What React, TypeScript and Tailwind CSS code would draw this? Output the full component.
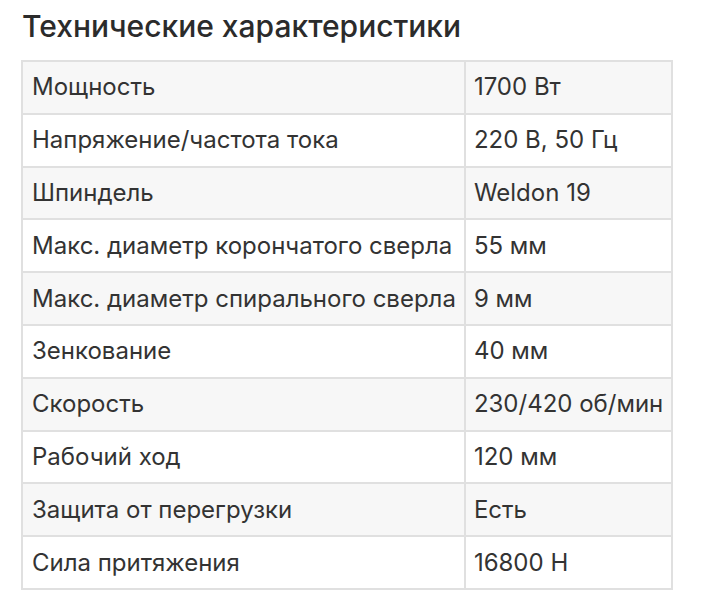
import React from "react";

const rows: [string, string][] = [
  ["Мощность", "1700 Вт"],
  ["Напряжение/частота тока", "220 В, 50 Гц"],
  ["Шпиндель", "Weldon 19"],
  ["Макс. диаметр корончатого сверла", "55 мм"],
  ["Макс. диаметр спирального сверла", "9 мм"],
  ["Зенкование", "40 мм"],
  ["Скорость", "230/420 об/мин"],
  ["Рабочий ход", "120 мм"],
  ["Защита от перегрузки", "Есть"],
  ["Сила притяжения", "16800 Н"],
];

export default function App() {
  return (
    <div className="w-[717px] h-[610px] bg-white pl-[21px] pt-[8px] text-[#333]" style={{ fontFamily: "Inter, 'Noto Sans', sans-serif" }}>
      <h2 className="text-[30px] leading-[36px] font-medium text-[#2b2b2b] mb-[16px] ml-[1px]">Технические характеристики</h2>
      <table className="border-collapse w-[652px] text-[24px]">
        <tbody>
          {rows.map(([k, v], i) => (
            <tr key={k} className={i % 2 === 0 ? "bg-[#f7f7f7]" : "bg-white"}>
              <td className="border-2 border-[#e0e0e0] h-[52.8px] pl-[9px] pr-2 py-0 w-[443px] whitespace-nowrap">{k}</td>
              <td className="border-2 border-[#e0e0e0] h-[52.8px] pl-[8px] pr-2 py-0 whitespace-nowrap">{v}</td>
            </tr>
          ))}
        </tbody>
      </table>
    </div>
  );
}
